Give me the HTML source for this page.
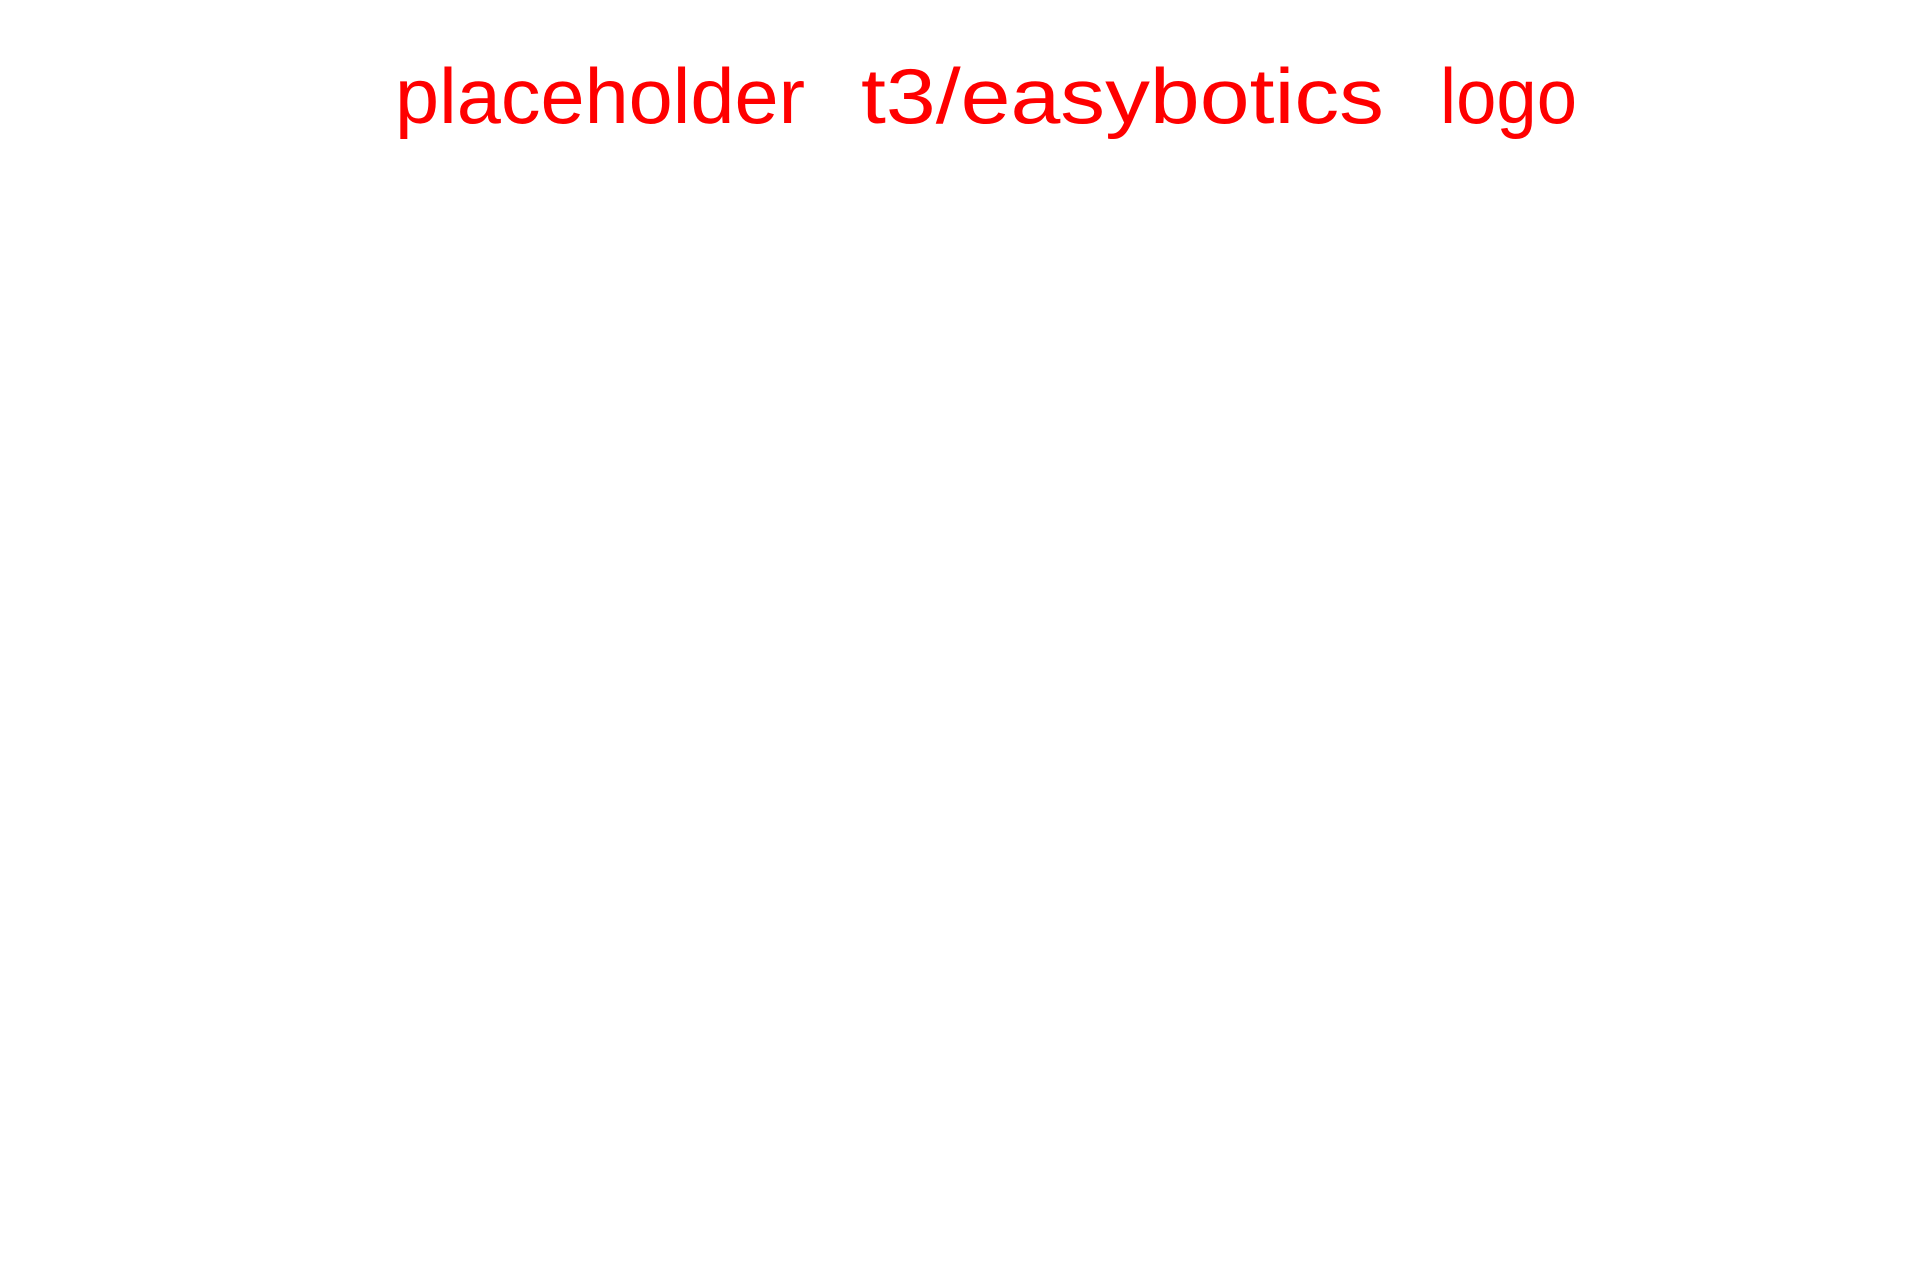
<!DOCTYPE html>
<html><head><meta charset="utf-8"><style>
html,body{margin:0;padding:0;background:#fff;width:1920px;height:1281px;overflow:hidden}
</style></head><body>
<svg width="1920" height="1281" xmlns="http://www.w3.org/2000/svg">
<g font-family="Liberation Sans, sans-serif" font-size="78" fill="#ff0000">
<text x="395" y="123" textLength="410" lengthAdjust="spacingAndGlyphs">placeholder</text>
<text x="861" y="123" textLength="523" lengthAdjust="spacingAndGlyphs">t3/easybotics</text>
<text x="1440" y="123" textLength="137" lengthAdjust="spacingAndGlyphs">logo</text>
</g>
</svg>
</body></html>
